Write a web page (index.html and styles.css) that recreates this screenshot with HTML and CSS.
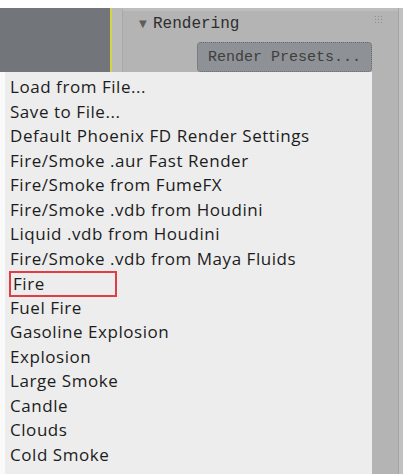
FILE: index.html
```html
<!DOCTYPE html>
<html>
<head>
<meta charset="utf-8">
<link rel="stylesheet" href="styles.css">
</head>
<body>
<div class="screen">
  <div class="top">
    <div class="left-panel"></div>
    <div class="divider"></div>
    <div class="gap-strip"></div>
    <div class="rollout">
      <div class="rollout-head">
        <span class="tri">▼</span><span class="title">Rendering</span>
        <svg class="grip" width="9" height="8" viewBox="0 0 9 8">
          <g fill="#8d8d8d">
            <rect x="0" y="0" width="1" height="1"/><rect x="3" y="0" width="1" height="1"/><rect x="6" y="0" width="1" height="1"/>
            <rect x="0" y="3" width="1" height="1"/><rect x="3" y="3" width="1" height="1"/><rect x="6" y="3" width="1" height="1"/>
            <rect x="0" y="6" width="1" height="1"/><rect x="3" y="6" width="1" height="1"/><rect x="6" y="6" width="1" height="1"/>
          </g>
        </svg>
      </div>
      <div class="btn-row"><div class="btn">Render Presets...</div></div>
    </div>
    <div class="edge"></div>
    <div class="white"></div>
  </div>
  <div class="bottom">
    <div class="gutter"></div>
    <ul class="menu">
      <li>Load from File...</li>
      <li>Save to File...</li>
      <li>Default Phoenix FD Render Settings</li>
      <li>Fire/Smoke .aur Fast Render</li>
      <li>Fire/Smoke from FumeFX</li>
      <li>Fire/Smoke .vdb from Houdini</li>
      <li>Liquid .vdb from Houdini</li>
      <li>Fire/Smoke .vdb from Maya Fluids</li>
      <li><span class="hl">Fire</span></li>
      <li>Fuel Fire</li>
      <li>Gasoline Explosion</li>
      <li>Explosion</li>
      <li>Large Smoke</li>
      <li>Candle</li>
      <li>Clouds</li>
      <li>Cold Smoke</li>
    </ul>
    <div class="panel-rest"></div>
    <div class="edge"></div>
    <div class="white"></div>
  </div>
</div>
</body>
</html>
```

FILE: styles.css
```css
html, body { margin: 0; padding: 0; background: #fff; }
.screen { width: 410px; height: 474px; overflow: hidden; padding-top: 8px; box-sizing: border-box; }
.top { display: flex; height: 64px; }
.left-panel { width: 110px; background: #72767b; }
.divider { width: 2px; background: #d8d44a; }
.gap-strip { width: 10px; background: #bababa; }
.rollout { width: 276px; background: #b4b4b4; border-left: 1px solid #a8a8a8; border-top: 3px solid #bdbdbd; box-sizing: border-box; display: flex; flex-direction: column; }
.rollout-head { display: flex; align-items: center; height: 25px; position: relative; padding-left: 16px; }
.tri { font-family: "DejaVu Sans", sans-serif; font-size: 10px; color: #5d5d5d; width: 14px; }
.title { font-family: "Liberation Mono", "DejaVu Sans Mono", monospace; font-size: 16px; color: #2e2e2e; }
.grip { position: absolute; right: 14px; top: 5px; }
.btn-row { display: flex; justify-content: flex-end; padding-top: 6px; padding-right: 26px; }
.btn { width: 175px; height: 30px; box-sizing: border-box; background: #8e9196; border: 1px dotted #666a6f; border-radius: 4px; font-family: "Liberation Mono", monospace; font-size: 15px; color: #3e3e3e; padding-left: 10px; line-height: 30px; }
.edge { width: 5px; background: #c1c1c1; border-left: 1px solid #a4a4a4; box-sizing: border-box; }
.white { width: 7px; background: #fff; }
.bottom { display: flex; height: 402px; }
.gutter { width: 5px; background: #fafafa; }
.menu { list-style: none; margin: 0; padding: 3px 0 0 5px; width: 367px; box-sizing: border-box; background: #ededed; font-family: "Open Sans", "Noto Sans", sans-serif; font-size: 17px; letter-spacing: 0.55px; color: #1c1c1c; }
.menu li { height: 24.5px; line-height: 24.5px; white-space: nowrap; }
.hl { display: inline-block; width: 108px; height: 26px; box-sizing: border-box; border: 2px solid #e23c44; margin-left: -1px; padding-left: 2px; line-height: 22px; }
.panel-rest { width: 26px; background: #b4b4b4; }
```
